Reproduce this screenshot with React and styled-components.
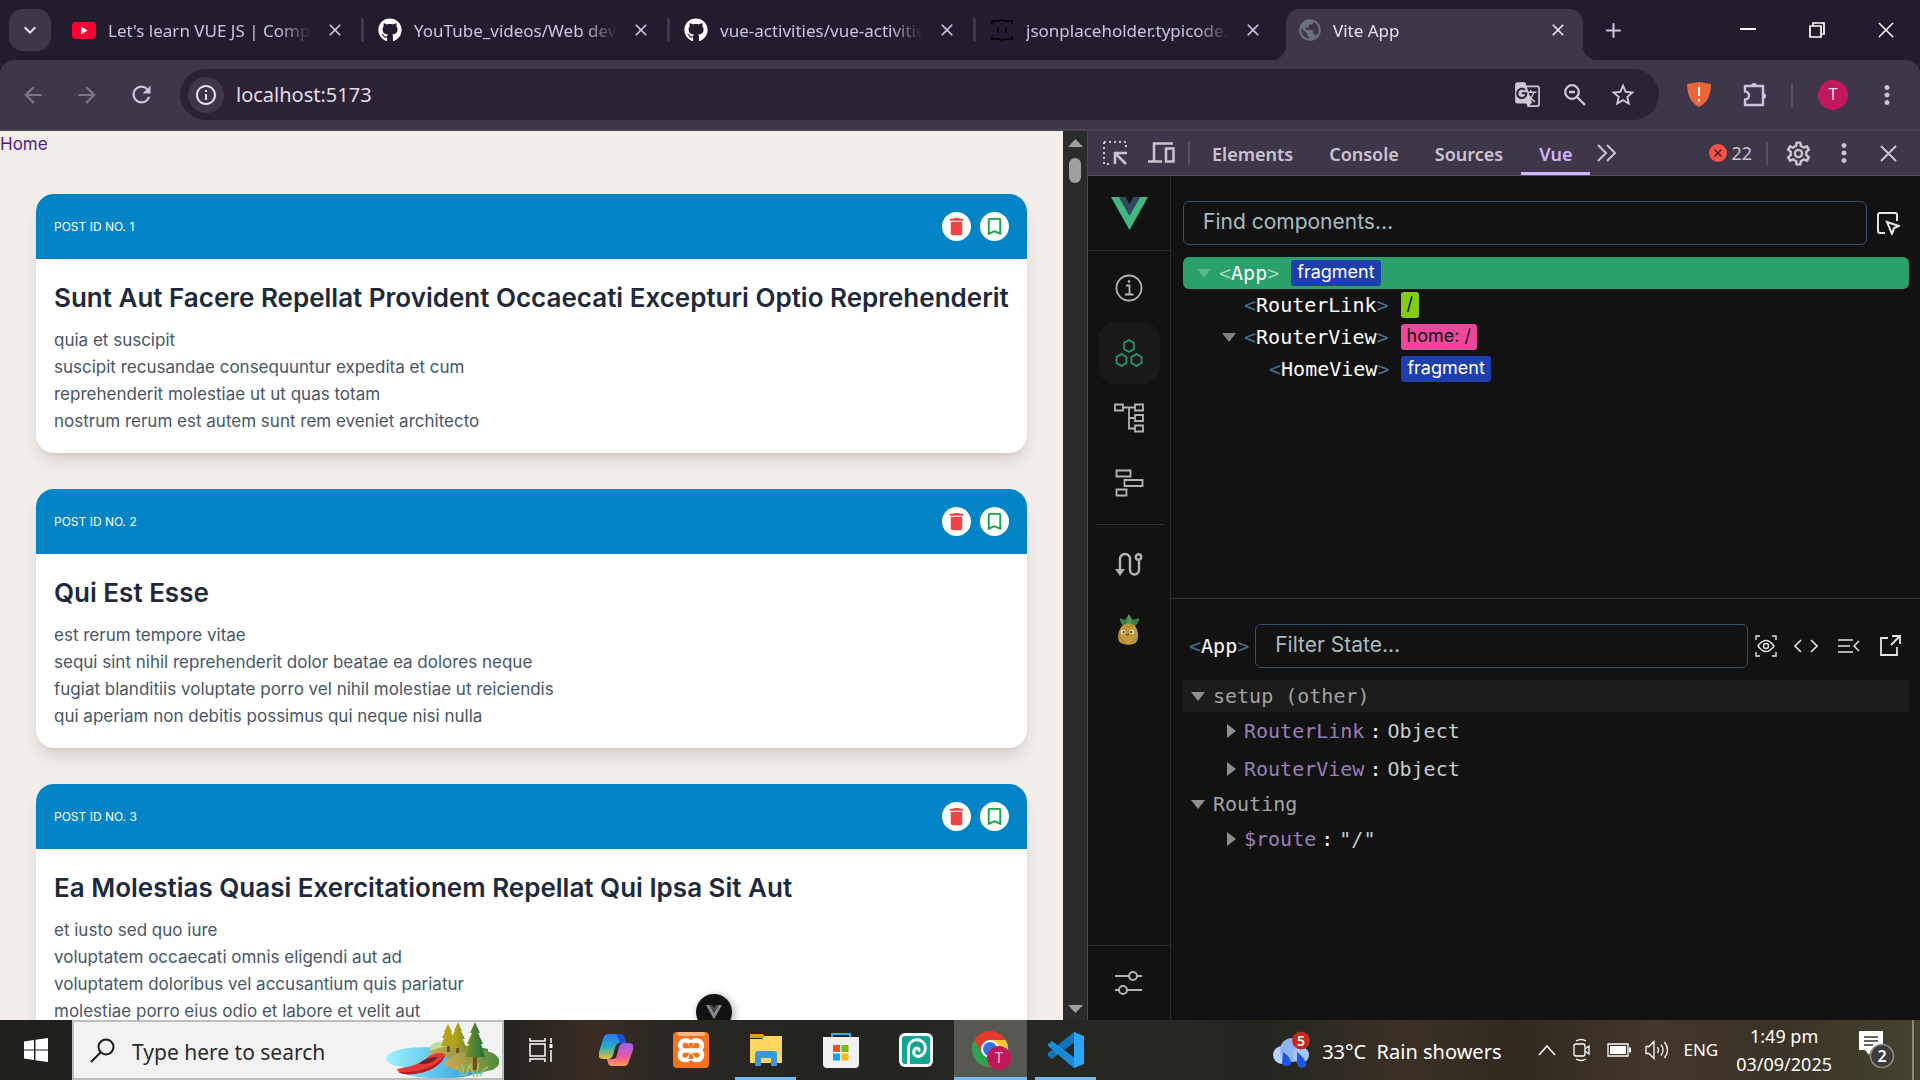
import React from "react";
import styled, { createGlobalStyle, css } from "styled-components";
import { FaGithub } from "react-icons/fa";
import {
  MdArrowBack,
  MdArrowForward,
  MdRefresh,
  MdInfoOutline,
  MdGTranslate,
  MdStarBorder,
  MdMoreVert,
  MdClose,
  MdAdd,
  MdExpandMore,
  MdPublic,
  MdDelete,
  MdBookmarkBorder,
  MdOutlineSettings,
} from "react-icons/md";

const ui = `"Noto Sans", "Open Sans", sans-serif`;
const panel = `Inter, "Liberation Sans", sans-serif`;
const mono = `"DejaVu Sans Mono", "Liberation Mono", monospace`;

const GlobalStyle = createGlobalStyle`
  *, *::before, *::after { box-sizing: border-box; }
  body { margin: 0; font-family: ${ui}; overflow: hidden; }
  button { border: 0; padding: 0; margin: 0; background: none; color: inherit; font: inherit; }
  svg { display: block; flex: none; }
  ul { list-style: none; margin: 0; padding: 0; }
`;

const Screen = styled.div`
  display: flex;
  flex-direction: column;
  height: 100vh;
  background: #241c2e;
`;

/* ---------- browser frame ---------- */

const TabStrip = styled.div`
  display: flex;
  align-items: center;
  height: 60px;
  flex: none;
  padding-left: 9px;
  color: #cdc4db;
`;

const TabSearch = styled.button`
  display: grid;
  place-items: center;
  width: 42px;
  height: 42px;
  margin-right: 6px;
  border-radius: 14px;
  background: #3f364a;
  color: #e6e0ee;
`;

const Tab = styled.div`
  position: relative;
  display: flex;
  align-items: center;
  gap: 12px;
  flex: 0 1 306px;
  height: 42px;
  min-width: 0;
  padding: 0 16px 0 15px;
  ${(p) =>
    p.$divided &&
    css`
      &::after {
        content: "";
        position: absolute;
        right: -1px;
        top: 9px;
        width: 3px;
        height: 24px;
        border-radius: 1px;
        background: #3f364a;
      }
    `}
  ${(p) =>
    p.$active &&
    css`
      flex-basis: 297px;
      align-self: flex-end;
      height: 51px;
      margin: 0 5px;
      padding: 0 13px 9px 11px;
      border-radius: 14px 14px 0 0;
      background: #3f364a;
      color: #e6e0ee;
      &::before,
      &::after {
        content: "";
        position: absolute;
        bottom: 0;
        width: 14px;
        height: 14px;
      }
      &::before {
        left: -14px;
        background: radial-gradient(circle at 0 0, transparent 14px, #3f364a 14px);
      }
      &::after {
        right: -14px;
        background: radial-gradient(circle at 100% 0, transparent 14px, #3f364a 14px);
      }
    `}
`;

const TabTitle = styled.span`
  flex: 1;
  min-width: 0;
  overflow: hidden;
  white-space: nowrap;
  font-size: 17px;
  line-height: 24px;
  padding-top: 1px;
  mask-image: linear-gradient(to right, #000 84%, transparent);
`;

const TabIcon = styled.span`
  display: grid;
  place-items: center;
  width: 24px;
`;

const IconButton = styled.button`
  display: grid;
  place-items: center;
  flex: none;
  width: ${(p) => p.$w || 54}px;
  height: ${(p) => p.$h || 36}px;
  color: ${(p) => p.$color || "inherit"};
`;

const WindowButtons = styled.div`
  display: flex;
  margin-left: auto;
  color: #fff;
`;

const Toolbar = styled.div`
  display: flex;
  align-items: center;
  flex: none;
  height: 71px;
  padding: 0 15px 0 6px;
  border-bottom: 2px solid #4a4252;
  border-radius: 14px 14px 0 0;
  background: #3f364a;
  color: #cdc4db;
`;

const AddressBar = styled.div`
  display: flex;
  align-items: center;
  flex: 1;
  height: 51px;
  margin: 0 14px 0 12px;
  padding: 0 12px 0 8px;
  border-radius: 26px;
  background: #2b2335;
  color: #cfc8d2;
`;

const SiteInfo = styled.button`
  display: grid;
  place-items: center;
  width: 36px;
  height: 36px;
  border-radius: 50%;
  background: #3f364a;
  color: #e6e0ee;
`;

const AddressInput = styled.input`
  flex: 1;
  min-width: 0;
  margin-left: 12px;
  padding: 0;
  border: 0;
  outline: 0;
  background: none;
  color: #e2dce6;
  font: 20px/30px ${ui};
`;

const Rule = styled.span`
  flex: none;
  width: 2px;
  height: 24px;
  border-radius: 1px;
  background: #5b5165;
`;

const Avatar = styled.button`
  width: 30px;
  height: 30px;
  margin: 0 21px 0 19px;
  border-radius: 50%;
  background: #c2185b;
  color: #f6dbe6;
  font: 16px/30px Roboto, sans-serif;
  text-align: center;
`;

/* ---------- page ---------- */

const Workspace = styled.div`
  display: grid;
  grid-template-columns: minmax(0, 1087fr) minmax(0, 833fr);
  grid-template-rows: minmax(0, 1fr);
  flex: 1;
  min-height: 0;
`;

const PageFrame = styled.div`
  position: relative;
  display: flex;
  min-width: 0;
  overflow: hidden;
`;

const Page = styled.main`
  flex: 1;
  min-width: 0;
  height: 100%;
  overflow: hidden;
  background: #f3eeea;
  font-family: ${panel};
  font-size: 17px;
  line-height: 27px;
  color: #475569;
`;

const HomeLink = styled.a`
  display: block;
  text-decoration: none;
  color: #551a8b;
`;

const PostList = styled.div`
  display: flex;
  flex-direction: column;
  gap: 36px;
  padding: 36px;
`;

const PostCard = styled.article`
  flex: none;
  overflow: hidden;
  border-radius: 18px;
  background: #fff;
  box-shadow: 0 11px 17px -3px rgba(60, 30, 20, 0.13), 0 4px 7px -4px rgba(60, 30, 20, 0.14);
`;

const PostHeader = styled.header`
  display: flex;
  align-items: center;
  gap: 9px;
  padding: 18px;
  background: #0284c7;
`;

const PostId = styled.span`
  flex: 1;
  font-size: 12px;
  line-height: 18px;
  color: #fff;
`;

const RoundButton = styled.button`
  display: grid;
  place-items: center;
  width: 29px;
  height: 29px;
  border-radius: 50%;
  background: #fff;
  color: ${(p) => p.$color};
`;

const PostBody = styled.div`
  padding: 18px;
`;

const PostTitle = styled.h2`
  margin: 0 0 9px;
  font-size: 26px;
  line-height: 41px;
  font-weight: 600;
  white-space: nowrap;
  color: #1e293b;
`;

const PostText = styled.p`
  margin: 0;
  white-space: pre-line;
`;

const Scrollbar = styled.div`
  display: flex;
  flex-direction: column;
  align-items: center;
  width: 24px;
  padding: 8px 0 7px;
  background: #2b2b2b;
`;

const Thumb = styled.div`
  width: 12px;
  height: 25px;
  margin: 11px 0 auto;
  border-radius: 6px;
  background: #9f9f9f;
`;

const VueBubble = styled.button`
  position: absolute;
  left: 696px;
  bottom: -10px;
  display: grid;
  place-items: center;
  width: 36px;
  height: 36px;
  border-radius: 50%;
  background: #121212;
  box-shadow: 2px 2px 10px rgba(0, 0, 0, 0.35);
`;

/* ---------- devtools ---------- */

const DevTools = styled.aside`
  display: flex;
  flex-direction: column;
  min-width: 0;
  border-left: 1px solid #4f465a;
  background: #121212;
`;

const DevBar = styled.div`
  display: flex;
  align-items: center;
  flex: none;
  height: 45px;
  padding: 0 4px 0 3px;
  border-bottom: 1px solid #5b5165;
  background: #3f364a;
  color: #cac5cd;
`;

const DevTab = styled.button`
  height: 44px;
  padding: 4px 18px 0;
  border-bottom: 3px solid ${(p) => (p.$active ? "#cfb5ff" : "transparent")};
  border-radius: 3px 3px 0 0;
  color: ${(p) => (p.$active ? "#cfb5ff" : "#cac5cd")};
  font: 600 18px/24px ${ui};
`;

const ErrorCount = styled.button`
  display: flex;
  align-items: center;
  gap: 4px;
  margin: 0 14px 0 auto;
  font-size: 18px;
  line-height: 24px;
`;

const DevBody = styled.div`
  display: flex;
  flex: 1;
  min-height: 0;
`;

const Rail = styled.nav`
  display: flex;
  flex-direction: column;
  align-items: center;
  width: 83px;
  border-right: 1px solid #2c2c2c;
  color: #b4b4b4;
`;

const RailEnd = styled.div`
  display: grid;
  place-items: center;
  align-self: stretch;
  height: 75px;
  ${(p) =>
    p.$bottom
      ? css`
          margin-top: auto;
          border-top: 1px solid #2c2c2c;
        `
      : css`
          border-bottom: 1px solid #2c2c2c;
        `}
`;

const RailGroup = styled.div`
  display: flex;
  flex-direction: column;
  align-items: center;
  gap: 3px;
  padding-top: 6px;
`;

const RailButton = styled.button`
  display: grid;
  place-items: center;
  width: 62px;
  height: 62px;
  border-radius: 18px;
  background: ${(p) => (p.$active ? "#191919" : "none")};
  color: ${(p) => (p.$active ? "#2aa06a" : "inherit")};
`;

const RailRule = styled.span`
  width: 69px;
  height: 1px;
  margin: 7px 0 6px;
  background: #303030;
`;

const Panes = styled.div`
  display: grid;
  grid-template-rows: minmax(0, 1fr) minmax(0, 1fr);
  flex: 1;
  min-width: 0;
`;

const Pane = styled.section`
  min-width: 0;
  overflow: hidden;
  padding: 25px 11px 0 12px;
  & + & {
    border-top: 1px solid #303030;
  }
`;

const SearchRow = styled.div`
  display: flex;
  align-items: center;
  margin-bottom: 12px;
  color: #e4e4e4;
`;

const SearchInput = styled.input`
  flex: 1;
  min-width: 0;
  height: 44px;
  padding: 0 19px 3px;
  border: 1px solid #35506e;
  border-radius: 6px;
  outline: 0;
  background: none;
  color: #fff;
  font: 21px/28px ${panel};
  &::placeholder {
    color: #a9bcc1;
    opacity: 1;
  }
`;

const TreeRow = styled.li`
  display: flex;
  align-items: center;
  gap: 8px;
  height: 32px;
  padding-left: ${(p) => 14 + p.$depth * 25}px;
  border-radius: 6px;
  background: ${(p) => (p.$selected ? "#2aa06a" : "none")};
  color: #808080;
  ${(p) =>
    p.$selected &&
    css`
      --bracket: #97d8b8;
      color: #57b88d;
    `}
`;

const Toggle = styled.button`
  display: grid;
  place-items: center;
  flex: none;
  width: 14px;
  height: 14px;
`;

const TagName = styled.span`
  font: 20px/28px ${mono};
  color: #fff;
  &::before,
  &::after {
    color: var(--bracket, #46708a);
  }
  &::before {
    content: "<";
  }
  &::after {
    content: ">";
  }
`;

const StateTag = styled(TagName)`
  margin: 0 6px;
`;

const Badge = styled.span`
  height: 26px;
  margin-left: 4px;
  padding: 0 6px;
  border-radius: 3px;
  background: ${(p) => p.$bg};
  color: ${(p) => p.$fg};
  font: 18px/24px ${panel};
`;

const StateHeading = styled.button`
  display: flex;
  align-items: center;
  gap: 8px;
  width: 100%;
  height: 32px;
  padding-left: 8px;
  background: ${(p) => (p.$hover ? "#1b1b1b" : "none")};
  color: #8f8f8f;
  font: 20px/28px ${mono};
  span {
    color: #a3a3a3;
  }
`;

const StateRow = styled.li`
  display: flex;
  align-items: center;
  height: 38px;
  padding-left: 41px;
  font: 20px/28px ${mono};
  color: #c3cfd3;
  button {
    color: #8f8f8f;
    margin-right: 6px;
  }
`;

const Key = styled.span`
  color: #9b7fb8;
  &::after {
    content: ":";
    margin: 0 6px 0 5px;
    color: #fff;
  }
`;

/* ---------- taskbar ---------- */

const TaskBar = styled.footer`
  display: flex;
  flex: none;
  height: 60px;
  background: linear-gradient(
    to right,
    #20211d 0,
    #23231f 26%,
    #382c23 31%,
    #2a2722 35%,
    #242521 42%,
    #262824 60%,
    #23261f 66%,
    #3b3026 73%,
    #30291f 79%,
    #43362a 86%,
    #3a3326 93%,
    #454330 100%
  );
  color: #fff;
`;

const StartButton = styled.button`
  display: grid;
  place-items: center;
  width: 72px;
`;

const TaskSearch = styled.label`
  display: flex;
  align-items: center;
  gap: 17px;
  width: 432px;
  padding: 0 2px 0 16px;
  border: 2px solid #bdbdbd;
  background: #f2f2f2;
  color: #1b1b1b;
  input {
    flex: 1;
    min-width: 0;
    padding: 3px 0 0;
    border: 0;
    outline: 0;
    background: none;
    font: 21px/32px ${ui};
    &::placeholder {
      color: #2b2b2b;
      opacity: 1;
    }
  }
`;

const Apps = styled.div`
  display: flex;
  gap: 2px;
`;

const AppButton = styled.button`
  position: relative;
  display: grid;
  place-items: center;
  width: 73px;
  height: 60px;
  background: ${(p) => (p.$active ? "#575852" : "none")};
  &::after {
    content: "";
    position: absolute;
    bottom: 0;
    left: ${(p) => (p.$active ? 0 : 6)}px;
    right: ${(p) => (p.$active ? 0 : 6)}px;
    height: 3px;
    background: ${(p) => (p.$running ? "#76b9ed" : "none")};
  }
`;

const Tray = styled.div`
  display: flex;
  align-items: center;
  margin-left: auto;
  padding-right: 6px;
`;

const Weather = styled.button`
  display: flex;
  align-items: center;
  gap: 12px;
  margin-right: 36px;
  font-size: 20px;
  line-height: 30px;
  white-space: pre;
  span {
    padding-top: 3px;
  }
`;

const TrayIcons = styled.div`
  display: flex;
  align-items: center;
  gap: 14px;
  font-size: 17px;
  line-height: 24px;
`;

const Clock = styled.time`
  margin: 0 27px 0 18px;
  font-size: 18px;
  line-height: 28px;
  text-align: center;
`;

const DesktopEdge = styled.span`
  width: 2px;
  height: 60px;
  margin-left: 17px;
  background: #8b8878;
`;

/* ---------- drawings ---------- */

const Down = () => (
  <svg width="14" height="9" viewBox="0 0 14 9" fill="currentColor"><path d="M0 0h14L7 9z" /></svg>
);
const Right = () => (
  <svg width="9" height="14" viewBox="0 0 9 14" fill="currentColor"><path d="M0 0v14l9-7z" /></svg>
);

const VueLogo = ({ width, outer = "#41b883", inner = "#35495e" }) => (
  <svg width={width} viewBox="0 0 37 33">
    <path fill={outer} d="M0 0h8l10.500 18.500L29 0h8L18.500 33z" />
    <path fill={inner} d="M8 0h6.500l4 7 4-7H29L18.500 18.500z" />
  </svg>
);

const YouTube = () => (
  <svg width="24" height="17" viewBox="0 0 24 17"><rect width="24" height="17" rx="4" fill="#ff0033" /><path fill="#fff" d="M9 4.500v8l6.500-4z" /></svg>
);
const Braces = () => (
  <svg width="24" height="24" viewBox="0 0 24 24" fill="none" stroke="#08060b" strokeWidth="1.800">
    <path d="M2 6V3h7l3-1 3 1h7v3M2 18v3h7l3 1 3-1h7v-3M8 9v6M16 9v6" />
  </svg>
);

const WinMin = () => <svg width="16" height="16" stroke="#fff" strokeWidth="2"><path d="M0 7h16" /></svg>;
const WinRestore = () => (
  <svg width="16" height="16" fill="none" stroke="#fff" strokeWidth="1.700"><path d="M1 4h11v11H1zM4 4V1h11v11h-3" /></svg>
);
const WinClose = () => <svg width="16" height="16" stroke="#fff" strokeWidth="1.500"><path d="M1 1l14 14M15 1L1 15" /></svg>;

const ZoomOut = () => (
  <svg width="24" height="24" fill="none" stroke="currentColor" strokeWidth="2.300">
    <circle cx="9" cy="9" r="6.800" /><path d="M14 14l8 8M6 9h6" />
  </svg>
);
const Puzzle = () => (
  <svg width="26" height="26" fill="none" stroke="currentColor" strokeWidth="2.400" strokeLinejoin="round">
    <path d="M3 4h18v19H3v-5.500a4 4 0 0 0 0-8z" />
    <path fill="currentColor" stroke="none" d="M9 4a3 3 0 0 1 6 0zM21 11a3 3 0 0 1 0 6z" />
  </svg>
);
const Shield = () => (
  <svg width="26" height="26" viewBox="0 0 26 26">
    <path fill="#eb6638" d="M1 2l12-2 12 2c0 11-4 19-12 23C5 21 1 13 1 2z" />
    <path stroke="#fff" strokeWidth="2" d="M13 5v9M13 17v2.500" />
  </svg>
);

const InspectIcon = () => (
  <svg width="24" height="24" fill="none" stroke="currentColor" strokeWidth="2">
    <path strokeDasharray="2 3" d="M1 1h22v8M1 1v22h8" />
    <path strokeWidth="2.500" d="M12 23V12h12M12.500 12.500L23 23" />
  </svg>
);
const DeviceIcon = () => (
  <svg width="27" height="22" fill="none" stroke="currentColor" strokeWidth="2.500">
    <path d="M25 1.500H6v17M0 19.500h14M18 6.500h7.500v13H18z" />
  </svg>
);
const More = () => (
  <svg width="20" height="18" fill="none" stroke="currentColor" strokeWidth="2"><path d="M1 1l8 8-8 8M10 1l8 8-8 8" /></svg>
);
const ErrorIcon = () => (
  <svg width="18" height="18"><circle cx="9" cy="9" r="9" fill="#fa5246" /><path stroke="#3f2530" strokeWidth="1.500" d="M5.500 5.500l7 7M12.500 5.500l-7 7" /></svg>
);
const CloseIcon = () => <svg width="17" height="17" stroke="currentColor" strokeWidth="2"><path d="M1 1l15 15M16 1L1 16" /></svg>;

const railSvg = { width: 30, height: 30, viewBox: "0 0 30 30", fill: "none", stroke: "currentColor", strokeWidth: 1.8 };
const InfoIcon = () => (
  <svg {...railSvg}><circle cx="15" cy="15" r="12.500" /><path d="M12 12.500h3.500V21M11 21.500h8.500" /><circle cx="15" cy="8.500" r="1" fill="currentColor" strokeWidth="0.800" /></svg>
);
const hex = (x, y) => `M${x} ${y - 6}l5 3v6l-5 3-5-3v-6z`;
const ComponentsIcon = () => <svg {...railSvg} strokeWidth="1.600"><path d={`${hex(15, 8)}${hex(7.5, 22)}${hex(22.5, 22)}`} /></svg>;
const TreeIcon = () => (
  <svg {...railSvg}><path d="M1 1.500h8v6H1zM21 1.500h8v6h-8zM21 12h8v6h-8zM21 22.500h8v6h-8zM9 4.500h12M15 4.500v21h6M15 15h6" /></svg>
);
const TimelineIcon = () => <svg {...railSvg}><path d="M2.500 2.500h14v6h-14zM10.500 12h18v6h-18zM2.500 21.500h10v6h-10z" /></svg>;
const RouteIcon = () => (
  <svg {...railSvg} strokeWidth="2.400">
    <path d="M6 20V9a5 5 0 0 1 10 0v11a4.500 4.500 0 0 0 9 0V11" /><circle cx="24.500" cy="7" r="2.700" /><path fill="currentColor" stroke="none" d="M1 19h10l-5 7z" />
  </svg>
);
const Pineapple = () => (
  <svg width="24" height="32" viewBox="0 0 24 32">
    <path fill="#3c7f45" d="M3 4l5 2 4-6 4 6 6-2c0 5-3 8-6 9H8C5 11 3 9 3 4z" />
    <path fill="#51995a" d="M12 0l3 10H9z" />
    <path fill="#c19a3a" d="M5 12c4-3 9-3 13 0 3 4 4 10 2 15-2 5-15 5-18 0-2-5 0-11 3-15z" />
    <path stroke="#a07b28" d="M2 22l6 8M21 22l-7 8M8 10l4 4 4-4" fill="none" />
    <circle cx="6" cy="18" r="2" fill="#eee" /><circle cx="15" cy="18" r="2" fill="#eee" />
    <circle cx="6.500" cy="18" r="1" fill="#222" /><circle cx="14.500" cy="18" r="1" fill="#222" />
    <path d="M9 20q1.500 2 3 0" stroke="#333" fill="none" />
  </svg>
);
const SlidersIcon = () => (
  <svg {...railSvg} strokeWidth="2"><path d="M1 8h14M23 8h5M1 22h4M13 22h15" /><circle cx="19" cy="8" r="4" /><circle cx="9" cy="22" r="4" /></svg>
);

const PickIcon = () => (
  <svg width="24" height="24" fill="none" stroke="currentColor" strokeWidth="2">
    <path d="M9 22H4a2 2 0 0 1-2-2V4a2 2 0 0 1 2-2h15a2 2 0 0 1 2 2v6" /><path d="M11 11l12 4-5 2-2 6z" />
  </svg>
);
const EyeFocus = () => (
  <svg width="22" height="22" fill="none" stroke="currentColor" strokeWidth="1.400">
    <path d="M1 5V1h4M17 1h4v4M21 17v4h-4M5 21H1v-4" /><path d="M3 11q8-11 16 0-8 11-16 0z" /><circle cx="11" cy="11" r="2.500" />
  </svg>
);
const CodeIcon = () => <svg width="24" height="14" fill="none" stroke="currentColor" strokeWidth="1.600"><path d="M7 1L1 7l6 6M17 1l6 6-6 6" /></svg>;
const CollapseIcon = () => (
  <svg width="22" height="16" fill="none" stroke="currentColor" strokeWidth="1.500"><path d="M0 2h15M0 8h12M0 14h15M21 3l-5 5 5 5" /></svg>
);
const OpenIcon = () => (
  <svg width="22" height="22" fill="none" stroke="currentColor" strokeWidth="1.800"><path d="M9 3H2v17h16v-8M13 1h8v8M21 1l-9 9" /></svg>
);

const Windows = () => (
  <svg width="24" height="24" fill="#fff"><path d="M0 3.500L10 2v9.500H0zM11.500 1.800L24 0v11.500H11.500zM0 12.500h10V22L0 20.500zM11.500 12.500H24V24l-12.500-1.800z" /></svg>
);
const SearchIcon = () => (
  <svg width="25" height="25" fill="none" stroke="#1b1b1b" strokeWidth="2"><circle cx="16" cy="9" r="7.500" /><path d="M10.500 14.500L1 24" /></svg>
);
const Scenery = () => (
  <svg width="114" height="56" viewBox="0 0 114 56">
    <defs>
      <linearGradient id="water"><stop offset="0" stopColor="#9bf3fb" /><stop offset="1" stopColor="#1f8fd8" /></linearGradient>
      <linearGradient id="pine" x1="0" x2="1"><stop offset="0.300" stopColor="#b5a418" /><stop offset="1" stopColor="#1d7040" /></linearGradient>
      <linearGradient id="land"><stop offset="0" stopColor="#d6ab4e" /><stop offset="1" stopColor="#4c8b3a" /></linearGradient>
    </defs>
    <path fill="url(#water)" d="M0 36c4-10 30-12 60-10l40 8c10 8 2 18-12 18-10 5-40 6-62 2-8-2-10-6-8-9C8 44 1 42 0 36z" />
    <ellipse cx="52" cy="26" rx="8" ry="6" fill="#c5dba0" />
    <path fill="url(#land)" d="M42 31c8-8 40-10 60-4v8c-20 3-44 2-60-4z" />
    <path fill="url(#land)" d="M58 42c8-12 30-16 46-12 12 4 12 14 2 18-20 5-38 2-48-6z" />
    <path fill="#7a4d1e" d="M61 24h3v6h-3zM70 24h3v7h-3zM87 34h4v14h-4z" />
    <path fill="url(#pine)" d="M62 2l4 8h-1l3 6h-2l3 8H55l3-8h-2l3-6h-1zM72 0l4 9h-1l4 8h-2l3 9H64l3-9h-2l4-8h-1zM89 0l5 11h-2l5 11h-2l4 13H79l4-13h-2l5-11h-2z" />
    <path fill="#e23b36" d="M11 47c12-2 24-5 31-12 6-4 12-5 17-3-3 12-18 19-32 20-8 1-15-1-16-5z" />
    <path fill="#b51f28" d="M12 50c18 1 36-3 47-17-3 11-18 18-32 19-6 1-12 0-15-2z" />
    <path fill="#7b1f26" d="M33 42c4-5 12-7 19-7-4 5-11 8-19 7z" />
    <path fill="none" stroke="#9fc46a" strokeWidth="1.500" d="M76 54q-2-8-7-9M78 54q-1-10-3-12M80 54q2-10 6-12M88 55q-2-10-6-12M91 55q0-10 2-14M94 54q3-8 8-9" />
  </svg>
);
const TaskView = () => (
  <svg width="24" height="24" fill="none" stroke="#fff" strokeWidth="1.500"><path d="M1 6h15v12H1zM1 0v3h15V0M1 24v-3h15v3M22 0v5M22 12v12" /><path d="M20.500 6h3v4h-3z" fill="#fff" stroke="none" /></svg>
);
const Copilot = () => (
  <svg width="34" height="32" viewBox="0 0 34 32">
    <defs>
      <linearGradient id="cpa" x2="0" y2="1"><stop offset="0" stopColor="#2a7af0" /><stop offset="0.500" stopColor="#25a9c9" /><stop offset="1" stopColor="#e6c42c" /></linearGradient>
      <linearGradient id="cpb" x2="0" y2="1"><stop offset="0" stopColor="#9a5cf5" /><stop offset="0.600" stopColor="#ec5c9c" /><stop offset="1" stopColor="#ff9a55" /></linearGradient>
    </defs>
    <path fill="url(#cpa)" d="M9 0h12c3 0 4 2 5 5l1 4h-6c-3 0-4 2-5 5l-2 7c-1 3-3 4-5 4H4c-4 0-5-3-4-7L4 5c1-3 2-5 5-5z" />
    <path fill="#1b4fd0" d="M17 0h4c3 0 4 2 5 5l1 4h-6z" />
    <path fill="url(#cpb)" d="M25 9h5c4 0 5 3 4 7l-4 11c-1 3-2 5-5 5H13c-3 0-4-2-5-7h5c3 0 4-1 5-4l2-8c1-2 2-4 5-4z" />
  </svg>
);
const Xampp = () => (
  <svg width="36" height="36" viewBox="0 0 36 36">
    <rect width="36" height="36" rx="4" fill="#f5731d" /><rect x="4" width="28" height="4" rx="2" fill="#f8b58a" />
    <path
      fill="none"
      stroke="#fff"
      strokeWidth="4.600"
      strokeLinejoin="round"
      d="M18 13c-1-4-4-5-6.500-4.500C8 9 6.500 12 7.500 15c.5 1.500 1 2.500 2 3.500-1.500 1-2.500 2.500-2.500 4.500 0 3 2 5 5 5s5-2 6-5c1 3 3 5 6 5s5-2 5-5c0-2-1-3.500-2.500-4.500 1-1 1.500-2 2-3.500 1-3-.5-6-4-6.500C22 8 19 9 18 13zM10 18.500h16"
    />
    <path fill="#f5731d" d="M15.500 11h5l-1 4h-3zM16.500 22h3l1 5h-5z" />
  </svg>
);
const Explorer = () => (
  <svg width="32" height="32" viewBox="0 0 32 32">
    <path fill="#e0a010" d="M0 0h13l3 4H0z" /><path fill="#ffd75e" d="M0 5h12l3-3h17v27H0z" />
    <path fill="#3b96dd" d="M5 32V20a3 3 0 0 1 3-3h16a3 3 0 0 1 3 3v12h-6v-8H11v8z" />
  </svg>
);
const Store = () => (
  <svg width="36" height="36" viewBox="0 0 36 36">
    <path fill="none" stroke="#27b4ea" strokeWidth="2" d="M9 7V2h18v5" />
    <path fill="#f1f1f1" d="M0 5h36v27a4 4 0 0 1-4 4H4a4 4 0 0 1-4-4z" />
    <path fill="#f25022" d="M10 13h7v7h-7z" /><path fill="#7fba00" d="M18.500 13h7v7h-7z" /><path fill="#00a4ef" d="M10 21.500h7v7h-7z" /><path fill="#ffb900" d="M18.500 21.500h7v7h-7z" />
  </svg>
);
const SpiralApp = () => (
  <svg width="34" height="34" viewBox="0 0 34 34">
    <rect width="34" height="34" rx="6" fill="#f3f7f6" /><rect x="3" y="3" width="28" height="28" rx="3" fill="#11a693" />
    <path fill="none" stroke="#fff" strokeWidth="3" d="M9.500 31V16a8.500 8.500 0 1 1 10 7.500c-4 0-6-4-4-7 2-3 6-1 4 2" />
  </svg>
);
const Chrome = () => (
  <svg width="40" height="40" viewBox="0 0 40 40">
    <circle cx="19" cy="19" r="18" fill="#e33b2e" />
    <path fill="#31a350" d="M3.400 10L11.200 23.500 19 28v9A18 18 0 0 1 3.400 10z" />
    <path fill="#fcc934" d="M19 10h15.600A18 18 0 0 1 19 37l8-13z" />
    <circle cx="19" cy="19" r="9" fill="#fff" /><circle cx="19" cy="19" r="7" fill="#3273e8" />
    <circle cx="28" cy="28" r="12" fill="#c2185b" />
    <text x="28" y="33" textAnchor="middle" fontFamily="Roboto, sans-serif" fontSize="14" fill="#f3bcd2">T</text>
  </svg>
);
const VsCode = () => (
  <svg width="36" height="36" viewBox="0 0 36 36">
    <path fill="#1173b8" d="M26 0l1 10L4 27l-4-3v-3z" /><path fill="#1b8bd6" d="M4 9l23 17-1 10L0 14v-2z" />
    <path fill="#2ba4f3" d="M26 0l10 4v28l-10 4z" />
  </svg>
);
const Rain = () => (
  <svg width="37" height="38" viewBox="0 0 37 38">
    <circle cx="9" cy="24" r="9" fill="#b9d1fb" /><circle cx="19" cy="19" r="12" fill="#8fb5f7" /><circle cx="28" cy="24" r="8" fill="#a6c4fa" />
    <path fill="#1f55e8" d="M10 21c5 3 8 7 8 12-2 3-8 3-9-1zM24 21c5 4 10 9 9 14-3 3-8 2-9-2z" />
    <circle cx="28" cy="9.500" r="9" fill="#c42b1c" />
    <text x="28" y="15" textAnchor="middle" fontFamily="Noto Sans, sans-serif" fontWeight="600" fontSize="14" fill="#fff">5</text>
  </svg>
);
const ChevronUp = () => <svg width="20" height="12" fill="none" stroke="#fff" strokeWidth="1.500"><path d="M2 11l8-9 8 9" /></svg>;
const Camera = () => (
  <svg width="22" height="24" fill="none" stroke="#fff" strokeWidth="1.300"><rect x="3" y="6" width="11" height="12" rx="2" /><path d="M14 11l4-3v8l-4-3M5 3q5-3 10 0M5 21q5 3 10 0" /></svg>
);
const Battery = () => (
  <svg width="24" height="14"><path fill="none" stroke="#fff" strokeWidth="1.300" d="M1 1h20v12H1z" /><path fill="#fff" d="M3 3h16v8H3zM22 4.500h2v5h-2z" /></svg>
);
const Speaker = () => (
  <svg width="24" height="20" fill="none" stroke="#fff" strokeWidth="1.300"><path d="M1 6.500h3l5-5v17l-5-5H1zM12.500 7q2 3 0 6M16 4.500q4 5.500 0 11M19.500 2q6 8 0 16" /></svg>
);
const Notifications = () => (
  <svg width="36" height="38" viewBox="0 0 36 38">
    <path fill="#fff" d="M0 0h24v19H12l-2 5-4-5H0z" /><path stroke="#39342a" strokeWidth="1.500" d="M5 6h14M5 10h14M5 14h9" />
    <circle cx="23" cy="25" r="11.500" fill="#3c3c3a" stroke="#8e8c84" strokeWidth="1.500" />
    <text x="23" y="31" textAnchor="middle" fontFamily="Noto Sans, sans-serif" fontWeight="600" fontSize="16" fill="#fff">2</text>
  </svg>
);

/* ---------- data ---------- */

const tabs = [
  { title: "Let's learn VUE JS | Comp", icon: <YouTube /> },
  { title: "YouTube_videos/Web dev", icon: <FaGithub size={24} color="#fff" /> },
  { title: "vue-activities/vue-activitie", icon: <FaGithub size={24} color="#fff" /> },
  { title: "jsonplaceholder.typicode.", icon: <Braces /> },
  { title: "Vite App", icon: <MdPublic size={26} color="#6a7078" />, active: true },
];

const posts = [
  {
    id: 1,
    title: "Sunt Aut Facere Repellat Provident Occaecati Excepturi Optio Reprehenderit",
    body: "quia et suscipit\nsuscipit recusandae consequuntur expedita et cum\nreprehenderit molestiae ut ut quas totam\nnostrum rerum est autem sunt rem eveniet architecto",
  },
  {
    id: 2,
    title: "Qui Est Esse",
    body: "est rerum tempore vitae\nsequi sint nihil reprehenderit dolor beatae ea dolores neque\nfugiat blanditiis voluptate porro vel nihil molestiae ut reiciendis\nqui aperiam non debitis possimus qui neque nisi nulla",
  },
  {
    id: 3,
    title: "Ea Molestias Quasi Exercitationem Repellat Qui Ipsa Sit Aut",
    body: "et iusto sed quo iure\nvoluptatem occaecati omnis eligendi aut ad\nvoluptatem doloribus vel accusantium quis pariatur\nmolestiae porro eius odio et labore et velit aut",
  },
];

const tree = [
  { name: "App", depth: 0, open: true, selected: true, badge: "fragment", bg: "#1e40af", fg: "#fff" },
  { name: "RouterLink", depth: 1, badge: "/", bg: "#84cc16", fg: "#111" },
  { name: "RouterView", depth: 1, open: true, badge: "home: /", bg: "#ec4899", fg: "#111" },
  { name: "HomeView", depth: 2, badge: "fragment", bg: "#1e40af", fg: "#fff" },
];

const state = [
  { heading: "setup (other)", hover: true, rows: [["RouterLink", "Object"], ["RouterView", "Object"]] },
  { heading: "Routing", rows: [["$route", '"/"']] },
];

const apps = [
  { name: "Task View", icon: <TaskView /> },
  { name: "Copilot", icon: <Copilot /> },
  { name: "XAMPP", icon: <Xampp /> },
  { name: "File Explorer", icon: <Explorer />, running: true },
  { name: "Microsoft Store", icon: <Store /> },
  { name: "Photo editor", icon: <SpiralApp /> },
  { name: "Google Chrome", icon: <Chrome />, running: true, active: true },
  { name: "Visual Studio Code", icon: <VsCode />, running: true },
];

/* ---------- sections ---------- */

function BrowserFrame() {
  return (
    <>
      <TabStrip>
        <TabSearch aria-label="Search tabs"><MdExpandMore size={24} /></TabSearch>
        {tabs.map((t, i) => (
          <Tab key={t.title} $active={t.active} $divided={i < 3}>
            <TabIcon>{t.icon}</TabIcon>
            <TabTitle>{t.title}</TabTitle>
            <IconButton $w={24} $h={24} aria-label="Close tab"><MdClose size={20} /></IconButton>
          </Tab>
        ))}
        <IconButton $w={50} aria-label="New tab"><MdAdd size={25} /></IconButton>
        <WindowButtons>
          <IconButton $w={69} aria-label="Minimize"><WinMin /></IconButton>
          <IconButton $w={69} aria-label="Restore"><WinRestore /></IconButton>
          <IconButton $w={69} aria-label="Close"><WinClose /></IconButton>
        </WindowButtons>
      </TabStrip>
      <Toolbar>
        <IconButton $color="#7f768a" aria-label="Back"><MdArrowBack size={26} /></IconButton>
        <IconButton $color="#7f768a" aria-label="Forward"><MdArrowForward size={26} /></IconButton>
        <IconButton aria-label="Reload"><MdRefresh size={27} /></IconButton>
        <AddressBar>
          <SiteInfo aria-label="Site information"><MdInfoOutline size={24} /></SiteInfo>
          <AddressInput aria-label="Address" defaultValue="localhost:5173" />
          <IconButton $w={48} aria-label="Translate"><MdGTranslate size={27} /></IconButton>
          <IconButton $w={48} aria-label="Zoom"><ZoomOut /></IconButton>
          <IconButton $w={48} aria-label="Bookmark"><MdStarBorder size={28} /></IconButton>
        </AddressBar>
        <IconButton $w={52} aria-label="Shields"><Shield /></IconButton>
        <IconButton $w={60} aria-label="Extensions"><Puzzle /></IconButton>
        <IconButton as="span" $w={14}><Rule /></IconButton>
        <Avatar aria-label="Profile">T</Avatar>
        <IconButton $w={36} aria-label="Menu"><MdMoreVert size={30} /></IconButton>
      </Toolbar>
    </>
  );
}

function PostsPage() {
  return (
    <PageFrame>
      <Page>
        <HomeLink href="/">Home</HomeLink>
        <PostList>
          {posts.map((p) => (
            <PostCard key={p.id}>
              <PostHeader>
                <PostId>POST ID NO. {p.id}</PostId>
                <RoundButton $color="#ef4444" aria-label="Delete"><MdDelete size={23} /></RoundButton>
                <RoundButton $color="#16a34a" aria-label="Save"><MdBookmarkBorder size={23} /></RoundButton>
              </PostHeader>
              <PostBody>
                <PostTitle>{p.title}</PostTitle>
                <PostText>{p.body}</PostText>
              </PostBody>
            </PostCard>
          ))}
        </PostList>
      </Page>
      <Scrollbar>
        <svg width="15" height="8" fill="#9f9f9f"><path d="M0 8h15L7.500 0z" /></svg>
        <Thumb />
        <svg width="15" height="8" fill="#9f9f9f"><path d="M0 0h15L7.500 8z" /></svg>
      </Scrollbar>
      <VueBubble aria-label="Toggle Vue DevTools"><VueLogo width={16} outer="#8a8a8a" inner="#4a4a4a" /></VueBubble>
    </PageFrame>
  );
}

function DevToolsPanel() {
  return (
    <DevTools>
      <DevBar>
        <IconButton $w={47} aria-label="Inspect element"><InspectIcon /></IconButton>
        <IconButton $w={46} aria-label="Device toolbar"><DeviceIcon /></IconButton>
        <IconButton as="span" $w={10}><Rule /></IconButton>
        {["Elements", "Console", "Sources", "Vue"].map((t) => (
          <DevTab key={t} $active={t === "Vue"}>{t}</DevTab>
        ))}
        <IconButton $w={34} aria-label="More tabs"><More /></IconButton>
        <ErrorCount><ErrorIcon />22</ErrorCount>
        <Rule />
        <IconButton $w={60} aria-label="Settings"><MdOutlineSettings size={29} /></IconButton>
        <IconButton $w={32} aria-label="Customize"><MdMoreVert size={30} /></IconButton>
        <IconButton $w={56} aria-label="Close DevTools"><CloseIcon /></IconButton>
      </DevBar>
      <DevBody>
        <Rail>
          <RailEnd><VueLogo width={37} /></RailEnd>
          <RailGroup>
            <RailButton aria-label="Overview"><InfoIcon /></RailButton>
            <RailButton $active aria-label="Components"><ComponentsIcon /></RailButton>
            <RailButton aria-label="Pages"><TreeIcon /></RailButton>
            <RailButton aria-label="Timeline"><TimelineIcon /></RailButton>
            <RailRule />
            <RailButton aria-label="Router"><RouteIcon /></RailButton>
            <RailButton aria-label="Pinia"><Pineapple /></RailButton>
          </RailGroup>
          <RailEnd $bottom><SlidersIcon /></RailEnd>
        </Rail>
        <Panes>
          <Pane>
            <SearchRow>
              <SearchInput aria-label="Find components" placeholder="Find components…" />
              <IconButton $w={42} aria-label="Select component"><PickIcon /></IconButton>
            </SearchRow>
            <ul>
              {tree.map((n) => (
                <TreeRow key={n.name} $depth={n.depth} $selected={n.selected}>
                  <Toggle as={n.open ? "button" : "span"} aria-label={n.open ? "Collapse" : undefined}>
                    {n.open && <Down />}
                  </Toggle>
                  <TagName>{n.name}</TagName>
                  <Badge $bg={n.bg} $fg={n.fg}>{n.badge}</Badge>
                </TreeRow>
              ))}
            </ul>
          </Pane>
          <Pane>
            <SearchRow>
              <StateTag>App</StateTag>
              <SearchInput aria-label="Filter state" placeholder="Filter State…" />
              <IconButton $w={36} aria-label="Scroll to component"><EyeFocus /></IconButton>
              <IconButton $w={44} aria-label="Show render code"><CodeIcon /></IconButton>
              <IconButton $w={42} aria-label="Collapse"><CollapseIcon /></IconButton>
              <IconButton $w={39} aria-label="Open in editor"><OpenIcon /></IconButton>
            </SearchRow>
            {state.map((s) => (
              <React.Fragment key={s.heading}>
                <StateHeading $hover={s.hover}><Down /><span>{s.heading}</span></StateHeading>
                <ul>
                  {s.rows.map(([k, v]) => (
                    <StateRow key={k}>
                      <Toggle aria-label="Expand"><Right /></Toggle>
                      <Key>{k}</Key>{v}
                    </StateRow>
                  ))}
                </ul>
              </React.Fragment>
            ))}
          </Pane>
        </Panes>
      </DevBody>
    </DevTools>
  );
}

function WindowsTaskbar() {
  return (
    <TaskBar>
      <StartButton aria-label="Start"><Windows /></StartButton>
      <TaskSearch>
        <SearchIcon />
        <input aria-label="Search" placeholder="Type here to search" />
        <Scenery />
      </TaskSearch>
      <Apps>
        {apps.map((a) => (
          <AppButton key={a.name} aria-label={a.name} $running={a.running} $active={a.active}>{a.icon}</AppButton>
        ))}
      </Apps>
      <Tray>
        <Weather><Rain /><span>33°C  Rain showers</span></Weather>
        <TrayIcons><ChevronUp /><Camera /><Battery /><Speaker /><span>ENG</span></TrayIcons>
        <Clock>1:49 pm<br />03/09/2025</Clock>
        <Notifications />
        <DesktopEdge />
      </Tray>
    </TaskBar>
  );
}

export default function App() {
  return (
    <Screen>
      <GlobalStyle />
      <BrowserFrame />
      <Workspace>
        <PostsPage />
        <DevToolsPanel />
      </Workspace>
      <WindowsTaskbar />
    </Screen>
  );
}
